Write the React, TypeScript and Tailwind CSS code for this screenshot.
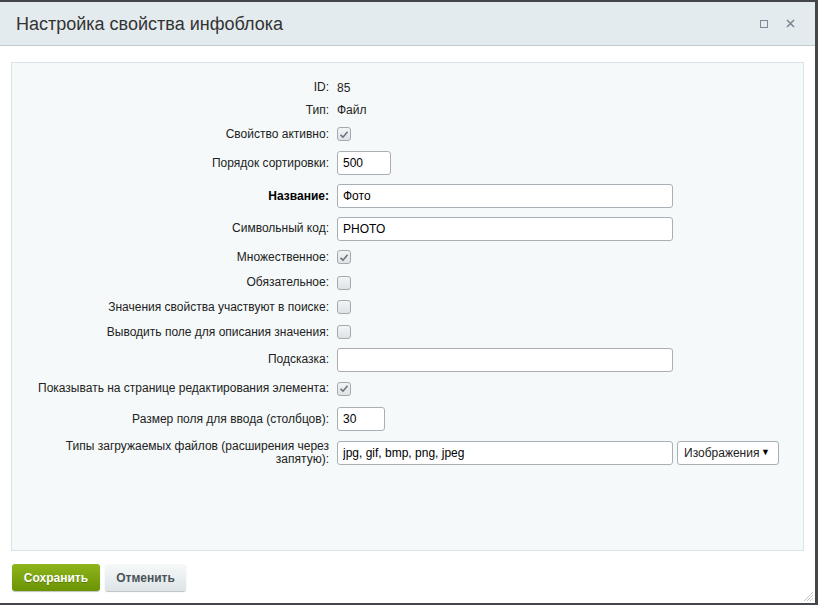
import type { ReactNode } from 'react'

const inputClass =
  'h-6 rounded-[3px] border border-[#a8b0b6] bg-white px-[5px] text-[12px] text-black outline-none'

function Check({ checked }: { checked?: boolean }) {
  return (
    <span className="flex h-[14px] w-[14px] items-center justify-center rounded-[3px] border border-[#a3a9ae] bg-gradient-to-b from-[#f2f4f5] to-[#dfe3e6]">
      {checked && (
        <svg width="10" height="9" viewBox="0 0 10 9">
          <path d="M1.5 4.8 L4 7.2 L8.6 1.8" fill="none" stroke="#6b747c" strokeWidth="1.6" />
        </svg>
      )}
    </span>
  )
}

function Row({ label, h, bold, children }: { label: ReactNode; h: string; bold?: boolean; children: ReactNode }) {
  return (
    <div className={`flex items-center ${h}`}>
      <div
        className={`w-[322px] shrink-0 pl-[12px] pr-[5px] text-right leading-[13px] ${bold ? 'font-bold text-black' : 'text-[#222]'}`}
      >
        {label}
      </div>
      <div className="flex flex-1 items-center pl-[3px] text-[#222]">{children}</div>
    </div>
  )
}

export default function App() {
  return (
    <div
      className="flex h-[605px] w-[818px] flex-col bg-[#43474c] pt-[2px] text-[12px]"
      style={{ fontFamily: '"Liberation Sans", Arial, sans-serif' }}
    >
      <div className="relative mr-[3px] flex flex-1 flex-col bg-white">
        {/* ---------- Заголовок ---------- */}
        <div className="flex h-[44px] items-center justify-between border-b border-[#c3cacf] bg-[#e3ebee] pl-4 pr-[20px]">
          <h1 className="text-[18px] leading-none text-[#333]">Настройка свойства инфоблока</h1>
          <div className="flex items-center gap-[18px] text-[#7b8a96]">
            <span className="block h-[8px] w-[8px] border border-[#7b8a96]" />
            <svg width="9" height="9" viewBox="0 0 9 9">
              <path d="M1 1 L8 8 M8 1 L1 8" stroke="#7b8a96" strokeWidth="1.6" />
            </svg>
          </div>
        </div>

        {/* ---------- Форма ---------- */}
        <div className="mx-[11px] mt-[16px] h-[489px] border border-[#d9e4e8] bg-[#f5f9f9] pt-[13px]">
          <Row label="ID:" h="h-[23px]">85</Row>
          <Row label="Тип:" h="h-[22px]">Файл</Row>
          <Row label="Свойство активно:" h="h-[26px]">
            <Check checked />
          </Row>
          <Row label="Порядок сортировки:" h="h-[32px]">
            <input className={`${inputClass} w-[54px]`} defaultValue="500" />
          </Row>
          <Row label="Название:" h="h-[34px]" bold>
            <input className={`${inputClass} w-[336px]`} defaultValue="Фото" />
          </Row>
          <Row label="Символьный код:" h="h-[31px]">
            <input className={`${inputClass} w-[336px]`} defaultValue="PHOTO" />
          </Row>
          <Row label="Множественное:" h="h-[26px]">
            <Check checked />
          </Row>
          <Row label="Обязательное:" h="h-[25px]">
            <Check />
          </Row>
          <Row label="Значения свойства участвуют в поиске:" h="h-[24px]">
            <Check />
          </Row>
          <Row label="Выводить поле для описания значения:" h="h-[26px]">
            <Check />
          </Row>
          <Row label="Подсказка:" h="h-[29px]">
            <input className={`${inputClass} w-[336px]`} />
          </Row>
          <Row label="Показывать на странице редактирования элемента:" h="h-[29px]">
            <Check checked />
          </Row>
          <Row label="Размер поля для ввода (столбцов):" h="h-[32px]">
            <input className={`${inputClass} w-[48px]`} defaultValue="30" />
          </Row>
          <Row label="Типы загружаемых файлов (расширения через запятую):" h="h-[36px]">
            <input className={`${inputClass} w-[336px]`} defaultValue="jpg, gif, bmp, png, jpeg" />
            <div className="ml-[4px] flex h-6 w-[102px] items-center justify-between rounded-[3px] border border-[#a8b0b6] bg-white pl-[6px] pr-[8px] text-[12px] text-[#222]">
              <span>Изображения</span>
              <span className="text-[9px] text-black">▼</span>
            </div>
          </Row>
        </div>

        {/* ---------- Кнопки ---------- */}
        <div className="flex gap-[5px] pl-[12px] pt-[13px]">
          <button className="h-[27px] w-[88px] rounded-[3px] bg-gradient-to-b from-[#8fb51a] to-[#6b9404] text-[12px] font-bold text-white [text-shadow:0_1px_rgba(0,0,0,0.25)] shadow-[0_1px_1px_rgba(0,0,0,0.25)]">
            Сохранить
          </button>
          <button className="h-[27px] w-[81px] rounded-[3px] bg-gradient-to-b from-[#f7f9f9] to-[#dde4e7] text-[12px] font-bold text-[#4a5359] shadow-[0_1px_1px_rgba(0,0,0,0.25)]">
            Отменить
          </button>
        </div>

        <svg className="absolute bottom-[1px] right-[1px]" width="12" height="12" viewBox="0 0 12 12">
          <path d="M11 2 L2 11 M11 5 L5 11 M11 8 L8 11" stroke="#c4c8cb" strokeWidth="1" />
        </svg>
      </div>
      <div className="h-[2px]" />
    </div>
  )
}
